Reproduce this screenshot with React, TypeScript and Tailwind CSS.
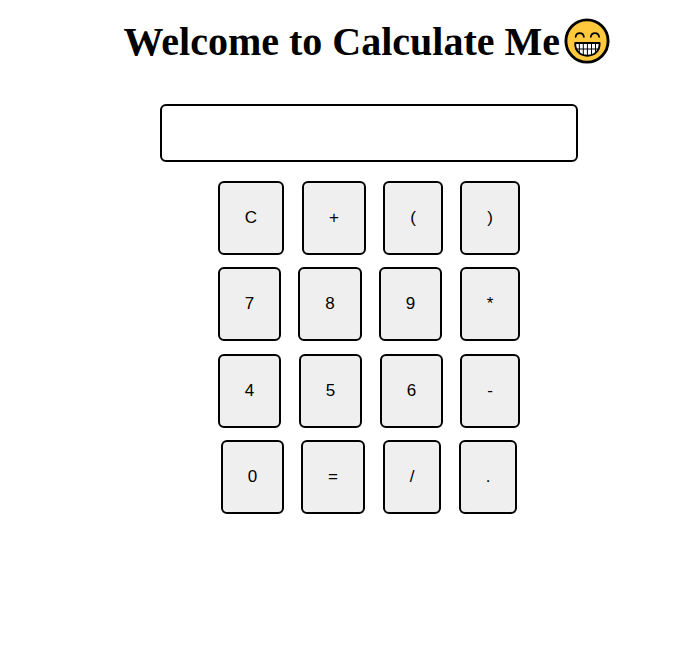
type Key = { label: string; box: string };

const rows: { className: string; keys: Key[] }[] = [
  {
    className: 'ml-[218px] mt-[19px]',
    keys: [
      { label: 'C', box: 'w-[66px]' },
      { label: '+', box: 'ml-[18px] w-[64px]' },
      { label: '(', box: 'ml-[17px] w-[60px]' },
      { label: ')', box: 'ml-[17px] w-[60px]' },
    ],
  },
  {
    className: 'ml-[218px] mt-[12px]',
    keys: [
      { label: '7', box: 'w-[63px]' },
      { label: '8', box: 'ml-[17px] w-[64px]' },
      { label: '9', box: 'ml-[17px] w-[63px]' },
      { label: '*', box: 'ml-[18px] w-[60px]' },
    ],
  },
  {
    className: 'ml-[218px] mt-[13px]',
    keys: [
      { label: '4', box: 'w-[63px]' },
      { label: '5', box: 'ml-[18px] w-[63px]' },
      { label: '6', box: 'ml-[18px] w-[63px]' },
      { label: '-', box: 'ml-[17px] w-[60px]' },
    ],
  },
  {
    className: 'ml-[221px] mt-[12px]',
    keys: [
      { label: '0', box: 'w-[63px]' },
      { label: '=', box: 'ml-[17px] w-[64px]' },
      { label: '/', box: 'ml-[18px] w-[58px]' },
      { label: '.', box: 'ml-[18px] w-[58px]' },
    ],
  },
];

function GrinningFace() {
  return (
    <svg className="ml-[4px] mt-[18px] h-[46px] w-[46px] shrink-0" viewBox="0 0 46 46" fill="none" aria-hidden="true">
      <circle cx="23" cy="23" r="21.1" fill="#ffc83d" stroke="#000" strokeWidth="2.9" />
      <path d="M11.600 18.800c.8-5 7.500-5 8.300 0M26.800 18.800c.8-5 7.500-5 8.300 0" stroke="#000" strokeWidth="1.700" strokeLinecap="round" />
      <path d="M11.200 25h24.400c.2 7.600-4.600 12.700-12.200 12.700S11 32.600 11.200 25Z" fill="#fff" stroke="#000" strokeWidth="1.900" strokeLinejoin="round" />
      <path d="M11.700 31h23.400M15.300 25v9.400M19.300 25v12.500M23.400 25v12.500M27.500 25v12.500M31.500 25v9.400" stroke="#000" strokeWidth="1" />
    </svg>
  );
}

export default function App() {
  return (
    <main className="flex h-[647px] w-[691px] flex-col bg-white text-black">
      <header className="flex h-[104px] items-start pl-[123px]">
        <h1 className="mt-[18px] w-[437px] whitespace-nowrap pl-[0.5px] font-['Liberation_Serif',serif] text-[40px] font-bold leading-[48px]">
          Welcome to Calculate Me
        </h1>
        <GrinningFace />
      </header>
      <input
        type="text"
        readOnly
        aria-label="Result"
        className="ml-[160px] h-[58px] w-[418px] rounded-[6px] border-2 border-black bg-white px-3 outline-none"
      />
      {rows.map((row, i) => (
        <div key={i} className={`flex ${row.className}`}>
          {row.keys.map((k) => (
            <button
              key={k.label}
              type="button"
              className={`flex h-[74px] items-center justify-center rounded-[6px] border-2 border-black bg-[#efefef] font-['Liberation_Sans',sans-serif] text-[17px] leading-[20px] ${k.box}`}
            >
              {k.label}
            </button>
          ))}
        </div>
      ))}
    </main>
  );
}
